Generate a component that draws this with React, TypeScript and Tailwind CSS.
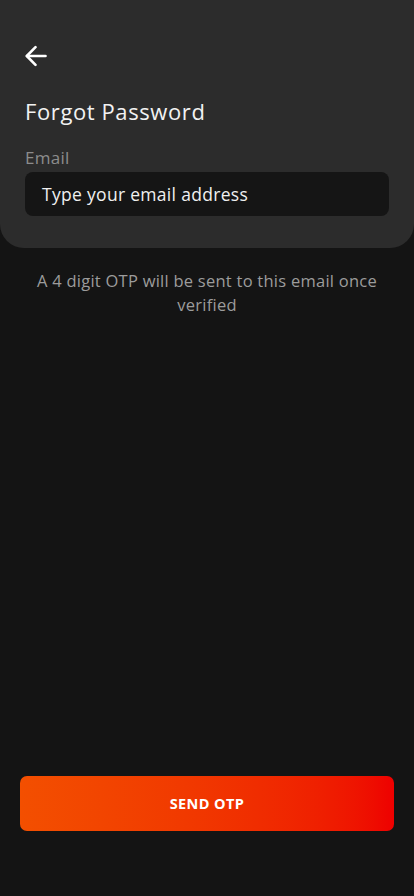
import React from "react";

const font = { fontFamily: '"Open Sans", "Liberation Sans", sans-serif' };

function BackArrow() {
  return (
    <svg width="22" height="22" viewBox="0 0 22 22" fill="none" stroke="currentColor" strokeWidth="2.6" strokeLinecap="round" strokeLinejoin="round">
      <path d="M20.5 11H2" />
      <path d="M10.5 2.2L1.8 11l8.7 8.8" />
    </svg>
  );
}

export default function App() {
  return (
    <div className="min-h-[896px] h-[896px] bg-[#141414] flex flex-col" style={font}>
      {/* Header card */}
      <div className="bg-[#2c2c2c] rounded-b-[24px] px-[25px] pt-[45px] pb-[32px]">
        <button className="text-white block">
          <BackArrow />
        </button>
        <h1 className="mt-[29px] text-[22px] leading-[30px] text-[#f2f2f2] tracking-[0.6px]">Forgot Password</h1>
        <label className="block mt-[20px] text-[17px] leading-[24px] text-[#8c8c8c] tracking-[0.3px]">Email</label>
        <div className="mt-[2px] h-[44px] bg-[#151515] rounded-[8px] flex items-center px-[17px]">
          <span className="text-[17.5px] text-[#f0f0f0] tracking-[0.3px]">Type your email address</span>
        </div>
      </div>

      <p className="mt-[21px] px-[34px] text-center text-[16.5px] leading-[24px] text-[#9c9c9c] tracking-[0.25px]">
        A 4 digit OTP will be sent to this email once verified
      </p>

      <div className="flex-1" />

      <div className="px-[20px] pb-[65px]">
        <button className="w-full h-[55px] rounded-[7px] bg-gradient-to-r from-[#f34f00] to-[#ee0000] text-white text-[14.5px] font-bold tracking-[0.4px]">
          SEND OTP
        </button>
      </div>
    </div>
  );
}
